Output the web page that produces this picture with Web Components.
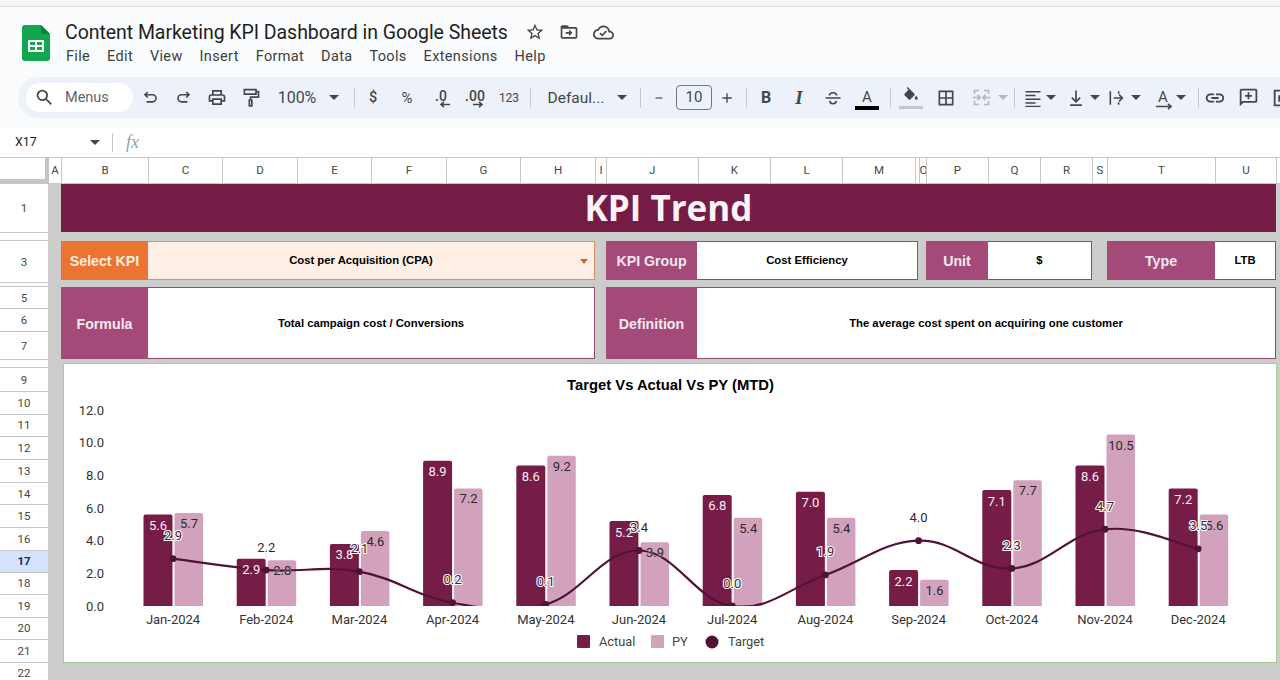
<!DOCTYPE html>
<html>
<head>
<meta charset="utf-8">
<title>Content Marketing KPI Dashboard</title>
<style>
  html, body { margin: 0; height: 680px; overflow: hidden; background: #f9fbfd; font-family: Roboto, "Liberation Sans", sans-serif; }
</style>
</head>
<body>
<gs-titlebar title-text="Content Marketing KPI Dashboard in Google Sheets"></gs-titlebar>
<gs-toolbar></gs-toolbar>
<gs-formula-bar cell="X17"></gs-formula-bar>
<gs-sheet>
  <kpi-banner>KPI Trend</kpi-banner>
  <kpi-row top="9" height="39">
    <kpi-field label="Select KPI" kind="select" width="534" label-width="87">Cost per Acquisition (CPA)</kpi-field>
    <kpi-field label="KPI Group" left="11" width="312" label-width="91">Cost Efficiency</kpi-field>
    <kpi-field label="Unit" left="8" width="166" label-width="62">$</kpi-field>
    <kpi-field label="Type" left="15" width="169" label-width="108">LTB</kpi-field>
  </kpi-row>
  <kpi-row top="7" height="72">
    <kpi-field label="Formula" width="534" label-width="87">Total campaign cost / Conversions</kpi-field>
    <kpi-field label="Definition" left="11" width="670" label-width="91">The average cost spent on acquiring one customer</kpi-field>
  </kpi-row>
  <kpi-chart chart-title="Target Vs Actual Vs PY (MTD)"></kpi-chart>
</gs-sheet>

<script>
const svg = (inner, size = 20, extra = '') => `<svg width="${size}" height="${size}" viewBox="0 0 24 24" fill="currentColor" ${extra}>${inner}</svg>`;
const line = (d, w = 2) => `<path d="${d}" fill="none" stroke="currentColor" stroke-width="${w}"/>`;
const caret = `<svg width="10" height="5" viewBox="0 0 10 5" fill="currentColor"><path d="M0 0h10L5 5z"/></svg>`;
const arrow = (d, w = 11) => `<svg width="${w}" height="7" viewBox="0 0 ${w} 7" fill="none" stroke="currentColor" stroke-width="1.6">${`<path d="${d}"/>`}</svg>`;

class GsTitlebar extends HTMLElement {
  connectedCallback() {
    const menus = ['File', 'Edit', 'View', 'Insert', 'Format', 'Data', 'Tools', 'Extensions', 'Help'];
    this.attachShadow({ mode: 'open' });
    this.shadowRoot.innerHTML = `
      <style>
        :host { display: block; height: 77px; box-sizing: border-box; background: #f9fbfd; color: #1f1f1f; }
        .strip { height: 6px; background: #f6f6f6; border-bottom: 1px solid #dedede; }
        .bar { display: flex; padding: 18px 0 0 22px; }
        .logo { width: 28px; height: 36px; margin-right: 15px; flex: none; }
        .title-row { display: flex; align-items: center; height: 24px; margin-top: -5px; }
        .title { font-size: 19.5px; letter-spacing: -0.05px; white-space: nowrap; width: 442px; }
        .title-row svg { flex: none; color: #444746; margin-right: 14px; }
        .title-row svg:first-of-type { margin-left: 18px; }
        .menus { display: flex; gap: 16.9px; height: 24px; margin-top: 1px; padding-left: 1px; font-size: 14.5px; line-height: 24px; color: #3c4043; letter-spacing: .35px; }
      </style>
      <div class="strip"></div>
      <div class="bar">
        <svg class="logo" viewBox="0 0 28 36">
          <path d="M3 0h16l9 9v24a3 3 0 0 1-3 3H3a3 3 0 0 1-3-3V3a3 3 0 0 1 3-3z" fill="#11a650"/>
          <path d="M19 0l9 9h-7a2 2 0 0 1-2-2z" fill="#0b7f3c"/>
          <path d="M6 15h16v12H6z M8 17v3h5v-3z M15 17v3h5v-3z M8 22v3h5v-3z M15 22v3h5v-3z" fill="#fff" fill-rule="evenodd"/>
        </svg>
        <div>
          <div class="title-row">
            <span class="title">${this.getAttribute('title-text')}</span>
            ${svg('<path d="M22 9.24l-7.19-.62L12 2 9.19 8.63 2 9.24l5.46 4.73L5.82 21 12 17.27 18.18 21l-1.63-7.03L22 9.24zM12 15.4l-3.76 2.27 1-4.28-3.32-2.88 4.38-.38L12 6.1l1.71 4.04 4.38.38-3.32 2.88 1 4.28L12 15.4z"/>')}
            ${svg('<path d="M20 6h-8l-2-2H4c-1.1 0-1.99.9-1.99 2L2 18c0 1.1.9 2 2 2h16c1.1 0 2-.9 2-2V8c0-1.1-.9-2-2-2zm0 12H4V8h16v10z"/><path d="M12 9l4 4-4 4v-3H8v-2h4z"/>')}
            ${svg('<path d="M19.35 10.04C18.67 6.59 15.64 4 12 4 9.11 4 6.6 5.64 5.35 8.04 2.34 8.36 0 10.91 0 14c0 3.31 2.69 6 6 6h13c2.76 0 5-2.24 5-5 0-2.64-2.05-4.78-4.65-4.96zM19 18H6c-2.21 0-4-1.79-4-4 0-2.05 1.53-3.76 3.56-3.97l1.07-.11.5-.95C8.08 7.14 9.94 6 12 6c2.62 0 4.88 1.86 5.39 4.43l.3 1.5 1.53.11c1.56.1 2.78 1.41 2.78 2.96 0 1.65-1.35 3-3 3z"/><path d="M10.5 16.5l-3.2-3.2 1.3-1.3 1.9 1.9 4.3-4.3 1.3 1.3z"/>', 21)}
          </div>
          <div class="menus">${menus.map(m => `<span>${m}</span>`).join('')}</div>
        </div>
      </div>`;
  }
}
customElements.define('gs-titlebar', GsTitlebar);

class GsToolbar extends HTMLElement {
  connectedCallback() {
    const grey = '#b4b8bc';
    // [centre x on the page, box width, content]
    const tools = [
      [150, 20, svg(line('M8.5 5L5 8.5 8.5 12M5 8.5h9.5a4.5 4.5 0 0 1 0 9H7'), 19)],
      [183, 20, svg(line('M15.5 5L19 8.5 15.5 12M19 8.5H9.5a4.5 4.5 0 0 0 0 9H17'), 19)],
      [217, 20, svg('<path d="M19 8h-1V3H6v5H5c-1.66 0-3 1.34-3 3v6h4v4h12v-4h4v-6c0-1.66-1.34-3-3-3zM8 5h8v3H8V5zm8 12v2H8v-4h8v2zm2-2v-2H6v2H4v-4c0-.55.45-1 1-1h14c.55 0 1 .45 1 1v4h-2z"/>', 21)],
      [251, 20, svg(line('M4 2.5h14v5.5H4zM18 5h3v6.5h-9.5V15M10 15h3v7h-3z', 2), 21)],
      [297, 44, '<span style="font-size:16px">100%</span>'],
      [334, 10, caret],
      [354, 1, 'sep'],
      [373, 12, '<span style="font-size:14.5px;font-weight:500;margin-top:-1px">$</span>'],
      [407, 16, '<span style="font-size:15px">%</span>'],
      [441, 22, `<span class="dec"><b>.0</b>${arrow('M11 3.5H2M5 .8L2 3.5 5 6.2')}</span>`],
      [475, 26, `<span class="dec"><b>.00</b>${arrow('M0 3.5h9M6 .8l3 2.7-3 2.7')}</span>`],
      [509, 24, '<span style="font-size:12px">123</span>'],
      [530, 1, 'sep'],
      [576, 62, '<span style="font-size:15.5px">Defaul...</span>'],
      [622, 10, caret],
      [640, 1, 'sep'],
      [659, 14, svg(line('M6 12h12'), 20)],
      [694, 36, '<span class="size">10</span>'],
      [727, 16, svg(line('M12 5v14M5 12h14'), 20)],
      [746, 1, 'sep'],
      [766, 14, '<span style="font:700 16px Roboto,sans-serif">B</span>'],
      [799, 14, '<span style="font:italic 700 19px \'Liberation Serif\',serif">I</span>'],
      [833, 20, svg(line('M3 12h18M7.5 9C8 4.5 16 4.5 16.5 9M8 15.5c.5 4.5 7.5 4.5 8 0', 1.9), 20)],
      [867, 24, '<span class="ink">A</span>'],
      [890, 1, 'sep'],
      [911, 24, `<span class="fill">${svg('<path d="M16.56 8.94L7.62 0 6.21 1.41l2.38 2.38-5.15 5.15c-.59.59-.59 1.54 0 2.12l5.5 5.5c.29.29.68.44 1.06.44s.77-.15 1.06-.44l5.5-5.5c.59-.58.59-1.53 0-2.12z"/><path d="M19 11.5s-2 2.17-2 3.5c0 1.1.9 2 2 2s2-.9 2-2c0-1.33-2-3.5-2-3.5z"/>', 18)}</span>`],
      [946, 20, svg(line('M4 4h16v16H4zM12 4v16M4 12h16'), 20)],
      [981, 20, `<span style="color:${grey};display:flex">${svg(line('M4 8V4h5M15 4h5v4M4 16v4h5M15 20h5v-4M2 12h8M7.5 9l3 3-3 3M22 12h-8M16.5 9l-3 3 3 3', 1.8), 21)}</span>`],
      [1003, 10, `<span style="color:${grey};display:flex">${caret}</span>`],
      [1014, 1, 'sep'],
      [1033, 20, svg(line('M3 4.5h18M3 9h12M3 13.5h18M3 18h12M3 22h18', 1.7), 20)],
      [1051, 10, caret],
      [1076, 20, svg(line('M12 3v13M7 11.5l5 5 5-5M5 20.5h14'), 20)],
      [1095, 10, caret],
      [1116.5, 20, svg(line('M4 4v16M8 12h10M14.5 8l4 4-4 4M14 4v3M14 17v3', 1.9), 20)],
      [1136, 10, caret],
      [1163, 20, `<span class="rot">A${arrow('M0 3.5h15M12 .8l3 2.7-3 2.7', 16)}</span>`],
      [1181, 10, caret],
      [1198, 1, 'sep'],
      [1215, 22, svg('<path d="M3.9 12c0-1.71 1.39-3.1 3.1-3.1h4V7H7c-2.76 0-5 2.24-5 5s2.24 5 5 5h4v-1.9H7c-1.71 0-3.1-1.39-3.1-3.1zM8 13h8v-2H8v2zm9-6h-4v1.9h4c1.71 0 3.1 1.39 3.1 3.1s-1.39 3.1-3.1 3.1h-4V17h4c2.76 0 5-2.24 5-5s-2.24-5-5-5z"/>', 22)],
      [1248, 22, svg('<path d="M20 2H4c-1.1 0-2 .9-2 2v18l4-4h14c1.1 0 2-.9 2-2V4c0-1.1-.9-2-2-2zm0 14H5.17L4 17.17V4h16v12z"/><path d="M11 6h2v3h3v2h-3v3h-2v-3H8V9h3z"/>', 21)],
      [1282, 22, svg(line('M4 4h16v16H4z') + '<path d="M8 9h8v7H8z"/>', 22)]
    ];
    let cursor = 133;
    const items = tools.map(([c, w, html]) => {
      const gap = c - w / 2 - cursor;
      cursor = c + w / 2;
      if (html === 'sep') return `<i class="sep" style="margin-left:${gap}px"></i>`;
      return `<span class="tool" style="margin-left:${gap}px;width:${w}px">${html}</span>`;
    }).join('');
    this.attachShadow({ mode: 'open' });
    this.shadowRoot.innerHTML = `
      <style>
        :host { display: block; height: 50px; padding-left: 18px; background: #f9fbfd; color: #444746; overflow: hidden; }
        .pill { display: flex; align-items: center; height: 41px; width: 1300px; padding-left: 8px; box-sizing: border-box; background: #edf2fa; border-radius: 20px 0 0 20px; }
        .search { display: flex; align-items: center; flex: none; width: 107px; height: 29px; box-sizing: border-box; padding-left: 8px; border-radius: 15px; background: #fff; font-size: 14.5px; color: #5f6368; gap: 10px; }
        .search svg { color: #444746; }
        .tool { display: flex; align-items: center; justify-content: center; flex: none; white-space: nowrap; }
        .sep { flex: none; width: 1px; height: 20px; background: #c7c7c7; }
        .size { box-sizing: border-box; width: 36px; height: 25px; line-height: 23px; text-align: center; border: 1px solid #747775; border-radius: 4px; font-size: 15px; }
        .dec { display: grid; justify-items: center; font-size: 14px; line-height: 13px; margin-top: 3px; }
        .dec b { font-weight: 500; }
        .dec svg { margin: -2px 0 0 7px; }
        .ink { display: block; width: 24px; text-align: center; font-size: 15px; line-height: 18px; border-bottom: 4px solid #000; margin-top: 3px; }
        .fill { display: grid; justify-items: center; width: 24px; }
        .fill::after { content: ''; width: 24px; height: 3px; background: #c4c7c5; margin-top: 1px; }
        .rot { display: grid; justify-items: center; font-size: 15px; line-height: 14px; margin-top: 4px; }
        .rot svg { margin: -1px 0 0 2px; }
      </style>
      <div class="pill">
        <span class="search">${svg('<path d="M15.5 14h-.79l-.28-.27A6.471 6.471 0 0 0 16 9.5 6.5 6.5 0 1 0 9.5 16c1.61 0 3.09-.59 4.23-1.57l.27.28v.79l5 4.99L20.49 19l-4.99-5zm-6 0C7.01 14 5 11.99 5 9.5S7.01 5 9.5 5 14 7.01 14 9.5 11.99 14 9.5 14z"/>', 21)}Menus</span>
        ${items}
      </div>`;
  }
}
customElements.define('gs-toolbar', GsToolbar);

class GsFormulaBar extends HTMLElement {
  connectedCallback() {
    this.attachShadow({ mode: 'open' });
    this.shadowRoot.innerHTML = `
      <style>
        :host { display: flex; align-items: center; height: 31px; box-sizing: border-box; background: #fff; border-bottom: 1px solid #c7c7c7; color: #1f1f1f; }
        .cell { width: 75px; margin-left: 15px; font-size: 12.5px; margin-top: -2px; }
        .caret { display: flex; color: #444746; }
        .sep { width: 1px; height: 19px; background: #c7c7c7; margin-left: 12px; }
        .fx { margin-left: 13px; font: italic 18px "Liberation Serif", serif; color: #9aa0a6; }
      </style>
      <span class="cell">${this.getAttribute('cell')}</span>
      <span class="caret">${caret}</span>
      <span class="sep"></span>
      <span class="fx">fx</span>`;
  }
}
customElements.define('gs-formula-bar', GsFormulaBar);

class GsSheet extends HTMLElement {
  connectedCallback() {
    const cols = [['A', 13], ['B', 87], ['C', 74], ['D', 75], ['E', 74], ['F', 75], ['G', 74], ['H', 75], ['I', 11], ['J', 91.5], ['K', 72.5], ['L', 72], ['M', 73], ['', 3.5], ['O', 7.5], ['P', 62], ['Q', 52], ['R', 52], ['S', 15], ['T', 108], ['U', 61], ['', 4]];
    // [label, height, vertical padding for clipped rows]
    const rows = [[1, 49], [2, 8, 4], [3, 42], [4, 4, 1], [5, 22], [6, 23], [7, 28], [8, 8, 5], [9, 24]];
    [[10, 22.5], [11, 22.5], [12, 23], [13, 23], [14, 22], [15, 22.5], [16, 23], [17, 22], [18, 22], [19, 23], [20, 22.5], [21, 22.5], [22, 22]].forEach(r => rows.push(r));
    this.attachShadow({ mode: 'open' });
    this.shadowRoot.innerHTML = `
      <style>
        :host { display: block; height: 522px; overflow: hidden; background: #ccc; }
        .heads { display: flex; height: 26px; box-sizing: border-box; background: #fff; border-bottom: 1px solid #c7c7c7; overflow: hidden; }
        .corner { flex: none; width: 45px; height: 21px; background: #fff; border-right: 4px solid #c4c4c4; border-bottom: 4px solid #c4c4c4; }
        .col { flex: none; box-sizing: border-box; border-right: 1px solid #c7c7c7; text-align: center; font-size: 11.5px; line-height: 25px; color: #444746; overflow: hidden; }
        .body { display: flex; }
        .rows { flex: none; width: 48px; background: #fff; }
        .row { box-sizing: border-box; border-bottom: 1px solid #c7c7c7; display: flex; justify-content: center; align-items: center; overflow: hidden; font-size: 11.5px; color: #444746; }
        .row.clip { align-items: flex-start; line-height: 14px; }
        .row.on { background: #d3e3fd; color: #0b2f5c; font-weight: 700; }
        .dash { flex: 1; padding-left: 13px; min-width: 0; }
      </style>
      <div class="heads">
        <div class="corner"></div>
        ${cols.map(([n, w]) => `<div class="col" style="width:${w}px">${n}</div>`).join('')}
      </div>
      <div class="body">
        <div class="rows">
          ${rows.map(([n, h, p]) => `<div class="row${p ? ' clip' : ''}${n === 17 ? ' on' : ''}" style="height:${h}px${p ? `;padding-top:${p}px` : ''}"><span>${n}</span></div>`).join('')}
        </div>
        <div class="dash"><slot></slot></div>
      </div>`;
  }
}
customElements.define('gs-sheet', GsSheet);

class KpiBanner extends HTMLElement {
  connectedCallback() {
    this.attachShadow({ mode: 'open' });
    this.shadowRoot.innerHTML = `
      <style>
        :host { display: flex; align-items: center; justify-content: center; height: 48px; width: 1215px; padding-bottom: 2px; box-sizing: border-box; background: #741c46; color: #fbf3f7; font: 700 35px "Open Sans", sans-serif; }
      </style>
      <slot></slot>`;
  }
}
customElements.define('kpi-banner', KpiBanner);

class KpiRow extends HTMLElement {
  connectedCallback() {
    this.attachShadow({ mode: 'open' });
    this.shadowRoot.innerHTML = `
      <style>
        :host { display: flex; width: 1215px; margin-top: ${this.getAttribute('top')}px; height: ${this.getAttribute('height')}px; }
      </style>
      <slot></slot>`;
  }
}
customElements.define('kpi-row', KpiRow);

class KpiField extends HTMLElement {
  connectedCallback() {
    const select = this.getAttribute('kind') === 'select';
    this.attachShadow({ mode: 'open' });
    this.shadowRoot.innerHTML = `
      <style>
        :host { display: flex; flex: none; width: ${this.getAttribute('width')}px; margin-left: ${this.getAttribute('left') || 0}px; box-sizing: border-box; font-family: "Liberation Sans", sans-serif; position: relative; }
        .label { flex: none; display: flex; align-items: center; justify-content: center; width: ${this.getAttribute('label-width')}px; background: ${select ? '#ec7433' : '#a34a78'}; color: ${select ? '#fdeedd' : '#f6e9f0'}; font-weight: 700; font-size: 14.2px; padding-top: 1px; box-sizing: border-box; }
        .value { flex: 1; display: flex; align-items: center; justify-content: center; box-sizing: border-box; background: ${select ? '#fdeee6' : '#fff'}; border: 1px solid ${select ? '#d98f63' : '#96466f'}; border-left: 0; font-weight: 700; font-size: 11.3px; color: #000; padding: 0 ${select ? 20 : 0}px 1px 0; }
        .caret { position: absolute; right: 7px; top: 50%; margin-top: -2px; width: 0; height: 0; border: 4px solid transparent; border-top: 5px solid #d2692a; border-bottom: 0; }
      </style>
      <div class="label">${this.getAttribute('label')}</div>
      <div class="value"><slot></slot></div>
      ${select ? '<span class="caret"></span>' : ''}`;
  }
}
customElements.define('kpi-field', KpiField);

class KpiChart extends HTMLElement {
  connectedCallback() {
    const months = ['Jan', 'Feb', 'Mar', 'Apr', 'May', 'Jun', 'Jul', 'Aug', 'Sep', 'Oct', 'Nov', 'Dec'];
    const actual = [5.6, 2.9, 3.8, 8.9, 8.6, 5.2, 6.8, 7.0, 2.2, 7.1, 8.6, 7.2];
    const py = [5.7, 2.8, 4.6, 7.2, 9.2, 3.9, 5.4, 5.4, 1.6, 7.7, 10.5, 5.6];
    const target = [2.9, 2.2, 2.1, 0.2, 0.1, 3.4, 0.0, 1.9, 4.0, 2.3, 4.7, 3.5];
    // svg origin is the chart's top-left corner, page (63, 363)
    const ox = 63, oy = 363, base = 606 - oy, unit = 16.33;
    const cx = i => 173 + i * 93.2 - ox;
    const y = v => base - v * unit;
    const rtop = (x, w, t) => `M${x} ${base}V${t + 2}q0-2 2-2h${w - 4}q2 0 2 2V${base}z`;

    const bars = months.map((m, i) => `
      <path d="${rtop(cx(i) - 29.5, 29, y(actual[i]))}" fill="#751c47"/>
      <path d="${rtop(cx(i) + 1.5, 28.5, y(py[i]))}" fill="#d2a2bc"/>`).join('');

    const pts = target.map((v, i) => [cx(i), y(v)]);
    let d = `M${pts[0][0]} ${pts[0][1]}`;
    const k = 0.2;
    for (let i = 0; i < pts.length - 1; i++) {
      const p0 = pts[i - 1] || pts[i], p1 = pts[i], p2 = pts[i + 1], p3 = pts[i + 2] || p2;
      d += `C${p1[0] + (p2[0] - p0[0]) * k} ${p1[1] + (p2[1] - p0[1]) * k} ${p2[0] - (p3[0] - p1[0]) * k} ${p2[1] - (p3[1] - p1[1]) * k} ${p2[0]} ${p2[1]}`;
    }

    const ticks = [0, 2, 4, 6, 8, 10, 12].map(v => `<text class="axis" x="41" y="${y(v) + 4.5}" text-anchor="end">${v.toFixed(1)}</text>`).join('');
    const cats = months.map((m, i) => `<text class="axis" x="${cx(i)}" y="${base + 18}" text-anchor="middle">${m}-2024</text>`).join('');
    const labelsA = actual.map((v, i) => `<text class="la" x="${cx(i) - 15}" y="${y(v) + 15.5}" text-anchor="middle">${v.toFixed(1)}</text>`).join('');
    const labelsP = py.map((v, i) => `<text class="lp" x="${cx(i) + 16}" y="${y(v) + 15}" text-anchor="middle">${v.toFixed(1)}</text>`).join('');
    const dots = pts.map(([x, yy]) => `<line x1="${x}" x2="${x}" y1="${yy - 18}" y2="${yy}" stroke="#ddd" stroke-width=".6"/><circle cx="${x}" cy="${yy}" r="3.4" fill="#521238"/>`).join('');
    const labelsT = pts.map(([x, yy], i) => `<text class="lt" x="${x}" y="${yy - 18.5}" text-anchor="middle">${target[i].toFixed(1)}</text>`).join('');

    this.attachShadow({ mode: 'open' });
    this.shadowRoot.innerHTML = `
      <style>
        :host { display: block; width: 1214px; height: 300px; margin: 4px 0 0 2px; box-sizing: border-box; background: #fff; border: 1px solid #a9cc8e; position: relative; }
        svg { display: block; position: absolute; left: -1px; top: -1px; font-family: Roboto, sans-serif; font-size: 13px; }
        .title { font: 700 14.8px "Liberation Sans", sans-serif; fill: #000; }
        .axis { fill: #333; font-size: 13px; }
        .la { fill: #fbeef4; stroke: #751c47; stroke-width: 1px; paint-order: stroke; }
        .lp { fill: #2b2b2b; stroke: #d2a2bc; stroke-width: 1px; paint-order: stroke; }
        .lt { fill: #3c1f33; stroke: #fff; stroke-width: 2.2px; paint-order: stroke; }
        .leg { fill: #444; font-size: 12.8px; }
      </style>
      <svg width="1214" height="300" viewBox="0 0 1214 300">
        <defs><clipPath id="plot"><rect x="0" y="0" width="1214" height="${base}"/></clipPath></defs>
        <text class="title" x="607.5" y="27" text-anchor="middle">${this.getAttribute('chart-title')}</text>
        ${ticks}${bars}
        <g clip-path="url(#plot)"><path d="${d}" fill="none" stroke="#521238" stroke-width="2.2"/>${dots}</g>
        ${labelsA}${labelsP}${labelsT}${cats}
        <rect x="514" y="272" width="13" height="13" rx="1" fill="#751c47"/>
        <text class="leg" x="536" y="283">Actual</text>
        <rect x="588" y="272" width="13" height="13" rx="1" fill="#d2a2bc"/>
        <text class="leg" x="609" y="283">PY</text>
        <circle cx="649" cy="279" r="6.5" fill="#521238"/>
        <text class="leg" x="665" y="283">Target</text>
      </svg>`;
  }
}
customElements.define('kpi-chart', KpiChart);
</script>
</body>
</html>
